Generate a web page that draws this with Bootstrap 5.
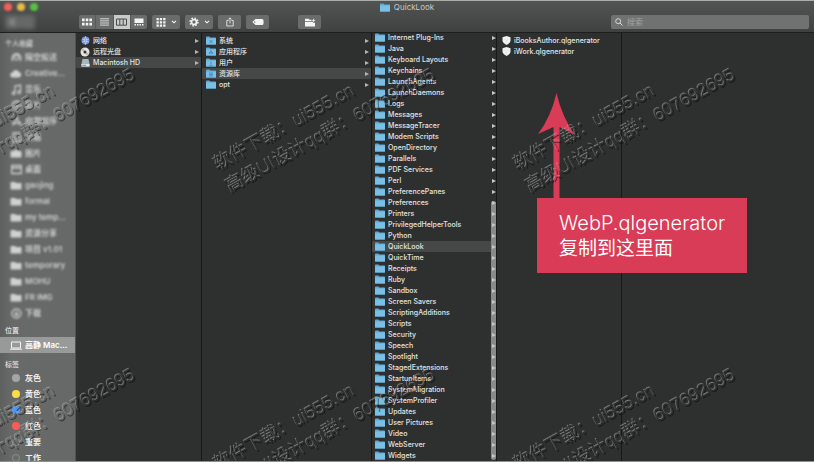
<!DOCTYPE html>
<html lang="zh-CN">
<head>
<meta charset="utf-8">
<meta name="viewport" content="width=device-width, initial-scale=1">
<title>QuickLook</title>
<link href="https://cdn.jsdelivr.net/npm/bootstrap@5.3.0/dist/css/bootstrap.min.css" rel="stylesheet">
<style>
html,body{height:100%}
body{font-family:Inter,"Noto Sans CJK SC",sans-serif;font-size:7px;line-height:11px;background:#2e302f;color:#e4e4e4;overflow:hidden}
svg{display:block;flex:none}
.finder{height:100%;border-bottom:1px solid #8d8f8e}
.topbar{border-top:1px solid #a9aeab;border-bottom:1px solid #1d1f1e;background:linear-gradient(#525553,#3e4140)}
.titleline{height:14px;color:#c6c9c7;font-size:8px;padding-bottom:1px}
.lights{left:4px;top:2px;gap:5px;filter:blur(1px)}
.lights i{width:8px;height:8px;border-radius:50%}
.l-close{background:#f4605a}.l-min{background:#e5bd46}.l-zoom{background:#5cc044}
.tools{height:17px;padding:0 5px 3px}
.tool{height:14px;padding:0;border:0;border-radius:2px;background:#6a6c6b;color:#f4f4f4;display:flex;align-items:center;justify-content:center;gap:5px}
.seg{width:68px;border-radius:2px;overflow:hidden}
.seg .tool{flex:1;border-radius:0}
.seg .tool+.tool{border-left:1px solid #585a59}
.seg .tool.active{background:#c9cbca;color:#4a4c4b}
.backs{width:30px;margin-right:44px;filter:blur(2px)}
.backs .tool{flex:1;background:#666867;color:#c4c6c5}
.w-menu{width:28px}.w-one{width:23px}
.gap-tools{gap:5px}
.ml-folder{margin-left:24px}
.search{width:198px;height:14px;border-radius:2px;background:#707271;padding:0 4px;gap:4px;color:#dcdcdc}
.search input{border:0;background:none;outline:0;padding:0;font-size:8px;line-height:12px;color:#eee;min-width:0}
.search input::placeholder{color:#a1a3a2;opacity:1}
.side{width:76px;background:linear-gradient(90deg,#5e5f5f,#686969 12px,#676868);border-right:1px solid #515252;font-size:8px;font-weight:600;color:#f0f0f0;padding-top:5px}
.side h2{font-size:7px;line-height:11px;margin:0;padding-left:5px;font-weight:500;color:#e2e2e2}
.side ul,.pane ul{list-style:none;margin:0;padding:0}
.side a{height:16px;padding-left:10px;gap:3px;color:inherit;text-decoration:none;white-space:nowrap}
.side a.on{background:#989999;color:#fff}
.side .places{padding:1px 0 6px}
.ic{width:12px;flex:none;display:flex;justify-content:center}
.hazy{filter:blur(1px);color:#d0d1d1}
.dot{width:8px;height:8px;border-radius:50%;border:1px solid transparent}
.d-gray{background:#a4a5a6}.d-yellow{background:#fbdd45}.d-blue{background:#4a97f7}.d-red{background:#fb5a55}.d-none2{border-color:#8d8e8e}
.pane{border-right:1px solid #171818;padding-top:2px;overflow:hidden;flex:none;font-weight:500}
.pane a{height:11px;padding:0 2px 0 4px;gap:3px;color:inherit;text-decoration:none;white-space:nowrap}
.pane a.on{background:#464847}
.pane .ic{width:10px}
.tri{border:solid transparent;border-width:2px 0 2px 4px;border-left-color:#b4b5b5;margin-left:auto}
.p1{width:126px}.p2{width:170px}.p3{width:125px;padding-top:0}.p4{width:125px}
.p3 ul{margin-top:-1px}
.p3 a{padding-left:3px;padding-right:0}
.scroller{right:0;top:168px;bottom:1px;width:5px;border-radius:3px;background:#898a8a}
.p3 .tri{z-index:1;border-left-color:#c4c5c5}
.callout{left:537px;top:93px;width:210px}
.callout div{background:#d83c56;color:#fff;font-family:"Noto Sans CJK SC",sans-serif;font-size:19px;line-height:24px;padding:13px 22px 14px}
.callout p{margin:0}
.callout .latin{font-family:Inter,sans-serif;font-size:20px;font-weight:300}
.callout svg{margin-left:1px}
.marks{inset:0;width:100%;height:100%;pointer-events:none;font-family:"Liberation Sans","Noto Sans CJK SC",sans-serif;font-size:18px}
</style>
<script src="https://cdn.jsdelivr.net/npm/bootstrap@5.3.0/dist/js/bootstrap.bundle.min.js"></script>
</head>
<body>
<svg width="0" height="0" class="position-absolute" aria-hidden="true">
<symbol id="folder" viewBox="0 0 10 9"><path fill="#5fa9d6" d="M0 1.2Q0 .5.7.5H3.4L4.3 1.4H9.3Q10 1.4 10 2V8Q10 8.5 9.4 8.5H.6Q0 8.5 0 8Z"/><path fill="#79bfe6" d="M0 2.6H10V8Q10 8.5 9.4 8.5H.6Q0 8.5 0 8Z"/></symbol>
<symbol id="plain" viewBox="0 0 12 9"><path fill="currentColor" d="M.5 1H5L6 2H11.5V8.5H.5Z"/></symbol>
<symbol id="plug" viewBox="0 0 9 9"><path fill="#f1f2f3" d="M4.5 0 8.5 1.2V5Q8 7.5 4.5 9 1 7.5.5 5V1.2Z"/><path d="M4.5 4.2V8M4.5 4.2 1.5 3M4.5 4.2 7.5 3" fill="none" stroke="#d8dadc" stroke-width=".5"/></symbol>
<symbol id="chev" viewBox="0 0 6 4"><path d="M1 .8 3 2.8 5 .8" fill="none" stroke="currentColor" stroke-width="1.1"/></symbol>
<symbol id="grid" viewBox="0 0 10 8"><path fill="currentColor" d="M0 .5H2.6V3.2H0ZM3.7.5H6.3V3.2H3.7ZM7.4.5H10V3.2H7.4ZM0 4.8H2.6V7.5H0ZM3.7 4.8H6.3V7.5H3.7ZM7.4 4.8H10V7.5H7.4Z"/></symbol>
</svg>
<div class="finder d-flex flex-column position-relative">
<header class="topbar">
 <div class="titleline d-flex align-items-center justify-content-center gap-1 position-relative">
  <div class="lights d-flex position-absolute"><i class="l-close"></i><i class="l-min"></i><i class="l-zoom"></i></div>
  <svg width="10" height="9"><use href="#folder"/></svg><span>QuickLook</span>
 </div>
 <div class="tools d-flex align-items-center">
  <div class="backs d-flex">
   <button class="tool" aria-label="后退"><svg width="5" height="8" viewBox="0 0 5 8"><path d="M4 1 1 4 4 7" fill="none" stroke="currentColor" stroke-width="1.500"/></svg></button>
   <button class="tool" aria-label="前进"></button>
  </div>
  <div class="d-flex gap-tools">
   <div class="seg d-flex">
    <button class="tool" aria-label="图标"><svg width="10" height="8"><use href="#grid"/></svg></button>
    <button class="tool" aria-label="列表"><svg width="9" height="8" viewBox="0 0 9 8"><path d="M0 .8H9M0 2.9H9M0 5H9M0 7.1H9" stroke="currentColor" stroke-width=".8"/></svg></button>
    <button class="tool active" aria-label="分栏"><svg width="11" height="8" viewBox="0 0 11 8"><path d="M.5 1H10.500V7.200H.5ZM3.800 1V7M7.200 1V7" fill="none" stroke="currentColor"/></svg></button>
    <button class="tool" aria-label="画廊"><svg width="10" height="8" viewBox="0 0 10 8"><path fill="currentColor" d="M.5.5H9.500V5H.5ZM.5 6H2V7.500H.5ZM3 6H4.500V7.500H3ZM5.500 6H7V7.500H5.500ZM8 6H9.500V7.500H8Z"/></svg></button>
   </div>
   <button class="tool w-menu" aria-label="排列"><svg width="10" height="9" viewBox="0 0 10 9"><path fill="currentColor" d="M.5 0H2.800V2.300H.5ZM3.800 0H6.100V2.300H3.800ZM7.200 0H9.500V2.300H7.200ZM.5 3.300H2.800V5.600H.5ZM3.800 3.300H6.100V5.600H3.800ZM7.200 3.300H9.500V5.600H7.200ZM.5 6.600H2.800V8.800H.5ZM3.800 6.600H6.100V8.800H3.800ZM7.200 6.600H9.500V8.800H7.200Z"/></svg><svg width="6" height="4"><use href="#chev"/></svg></button>
   <button class="tool w-menu" aria-label="操作"><svg width="10" height="10" viewBox="0 0 10 10"><g fill="none" stroke="currentColor"><circle cx="5" cy="5" r="2.500" stroke-width="1.700"/><circle cx="5" cy="5" r="3.900" stroke-width="1.500" stroke-dasharray="1.530 1.530"/></g></svg><svg width="6" height="4"><use href="#chev"/></svg></button>
   <button class="tool w-one" aria-label="共享"><svg width="8" height="10" viewBox="0 0 8 10"><path d="M2.500 3.500H.8V9H7.200V3.500H5.500M4 6.500V1M2.300 2.500 4 .8 5.700 2.500" fill="none" stroke="currentColor" stroke-width=".8"/></svg></button>
   <button class="tool w-one" aria-label="标签"><svg width="12" height="8" viewBox="0 0 12 8"><path fill="currentColor" fill-rule="evenodd" d="M3.500 1H10Q11.500 1 11.500 2.500V5.500Q11.500 7 10 7H3.500L.8 4.500Q.3 4 .8 3.500ZM3 3.400A.7.700 0 1 0 3 4.700.7.700 0 0 0 3 3.400Z"/></svg></button>
   <button class="tool w-one ml-folder" aria-label="新建文件夹"><svg width="12" height="9" viewBox="0 0 12 9"><path fill="currentColor" d="M1 .7H4.500L5.500 1.700H7.500V3H1ZM1 3.700H8.500L9.500 4.800H11V8.500H1Z"/><path d="M9.600.8V4M8 2.400H11.200" stroke="currentColor" stroke-width=".8"/></svg></button>
  </div>
  <label class="search d-flex align-items-center ms-auto" for="q"><svg width="8" height="8" viewBox="0 0 8 8"><circle cx="3.200" cy="3.200" r="2.500" fill="none" stroke="currentColor" stroke-width=".9"/><path d="M5 5 7.500 7.500" stroke="currentColor"/></svg><input id="q" class="flex-grow-1" type="text" placeholder="搜索" aria-label="搜索"></label>
 </div>
</header>
<main class="d-flex flex-grow-1 overflow-hidden">
 <nav class="side flex-shrink-0 overflow-hidden" id="side"></nav>
 <section class="pane p1" id="p1"></section>
 <section class="pane p2" id="p2"></section>
 <section class="pane p3 position-relative" id="p3"></section>
 <section class="pane p4" id="p4"></section>
 <section class="flex-grow-1"></section>
</main>
<div class="callout position-absolute">
 <svg width="38" height="105" viewBox="0 0 38 105"><path fill="#d83c56" d="M18.500 0Q24 24 37 42Q28 37 21.500 34V105H15.500V34Q9 37 0 41Q13 24 18.500 0Z"/></svg>
 <div><p class="latin">WebP.qlgenerator</p><p>复制到这里面</p></div>
</div>
<svg class="marks position-absolute" id="marks" aria-hidden="true">
 <defs><filter id="emboss" x="-5%" y="-5%" width="110%" height="110%">
  <feOffset in="SourceAlpha" dx="-1" dy="-1" result="up"/><feComposite in="up" in2="SourceAlpha" operator="out" result="upEdge"/>
  <feFlood flood-color="#b4b6b5" flood-opacity=".5"/><feComposite in2="upEdge" operator="in" result="light"/>
  <feOffset in="SourceAlpha" dx="1" dy="1" result="down"/><feComposite in="down" in2="SourceAlpha" operator="out" result="downEdge"/>
  <feFlood flood-color="#0c0d0d" flood-opacity=".5"/><feComposite in2="downEdge" operator="in" result="dark"/>
  <feMerge><feMergeNode in="dark"/><feMergeNode in="light"/></feMerge></filter></defs>
</svg>
</div>
<script>
const use=(id,w,h)=>`<svg width="${w}" height="${h}"><use href="#${id}"/></svg>`;
const line=d=>`<svg width="11" height="11" viewBox="0 0 11 11"><path d="${d}" fill="none" stroke="currentColor" stroke-width="1.3"/></svg>`;
const li=(icon,text,cls='',tri='')=>`<li><a href="#" class="d-flex align-items-center ${cls}"><span class="ic">${icon}</span><span>${text}</span>${tri}</a></li>`;
const tri='<i class="tri"></i>';
const fold=use('folder',10,9), side=use('plain',12,9);
const glyph={
 air:line('M2 9A4.500 4.500 0 1 1 9 9M3.700 7.500A2.500 2.500 0 1 1 7.300 7.500M5.500 6V9'),
 cloud:'<svg width="12" height="9" viewBox="0 0 12 9"><path fill="currentColor" d="M3 8.500A2.500 2.500 0 0 1 2.500 3.500 3.500 3.500 0 0 1 9 3 2.800 2.800 0 0 1 9 8.500Z"/></svg>',
 music:line('M4 9V2L9.500 1V8M4 9A1.300 1.300 0 1 1 2.500 8H4M9.500 8A1.300 1.300 0 1 1 8 7H9.500'),
 apps:line('M2 9.500 6 1.500 9.500 9.500M1 7H10.500'),
 doc:line('M2 1H7L9 3V10H2ZM4 5H7M4 7.500H7'),
 camera:'<svg width="12" height="9" viewBox="0 0 12 9"><path fill="currentColor" d="M.5 2H3.500L4.500.7H7.500L8.500 2H11.500V8.500H.5Z"/></svg>',
 desk:line('M.7 1.500H10.300V9.500H.7ZM1 4H10'),
 down:line('M5.500 1A4.500 4.500 0 1 1 5.400 1M5.500 3V7.500M3.500 5.500 5.500 7.500 7.500 5.500')
};
document.getElementById('side').innerHTML=
 `<div class="hazy"><h2>个人收藏</h2><ul>`+
 [[glyph.air,'隔空投送'],[glyph.cloud,'Creative...'],[glyph.music,'音乐'],[glyph.down,'影片'],[glyph.apps,'应用程序'],[glyph.doc,'文稿'],[glyph.camera,'图片'],[glyph.desk,'桌面'],
 [side,'gaojing'],[side,'formal'],[side,'my temp...'],[side,'资源分享'],[side,'项目 v1.01'],[side,'temporary'],[side,'MOHU'],[side,'FR IMG'],[glyph.down,'下载']].map(r=>li(...r)).join('')+
 `</ul></div><h2 class="pt-1">位置</h2><ul class="places">`+
 li('<svg width="12" height="9" viewBox="0 0 12 9"><path d="M1.500 1H10.500V7H1.500ZM0 8.200H12" fill="none" stroke="currentColor" stroke-width=".9"/></svg>','高静 Mac...','on')+
 `</ul><h2>标签</h2><ul>`+
 [['gray','灰色'],['yellow','黄色'],['blue','蓝色'],['red','红色'],['none2','重要'],['none2','工作']].map(([c,t])=>li(`<i class="dot d-${c}"></i>`,t)).join('')+'</ul>';
const globe='<svg width="9" height="9" viewBox="0 0 9 9"><circle cx="4.500" cy="4.500" r="4" fill="#6f8fcb"/><path d="M1 3Q4 5 8 3M1 6Q4 4 8 6M4.500.5Q2 4 4.500 8.500M4.500.5Q7 4 4.500 8.500" fill="none" stroke="#d5e0f5" stroke-width=".6"/></svg>';
const disc='<svg width="10" height="10" viewBox="0 0 10 10"><circle cx="5" cy="5" r="4.500" fill="#e6e4e0"/><path d="M5 5 1 3A4.500 4.500 0 0 1 3 1ZM5 5 9 7A4.500 4.500 0 0 1 7 9Z" fill="#b8b6a4"/><circle cx="5" cy="5" r="1.500" fill="#333"/></svg>';
const drive='<svg width="9" height="9" viewBox="0 0 9 9"><path d="M1.500 1H7.500L8.500 6V8.500H.5V6Z" fill="#a9b6bc"/><path d="M.5 6H8.500V8.500H.5Z" fill="#e2e6e8"/><path d="M1.500 7.300H5" stroke="#556" stroke-width=".7"/></svg>';
const mark=d=>`<svg width="10" height="9" viewBox="0 0 10 9"><use href="#folder"/><path d="${d}" fill="none" stroke="#3d83b2" stroke-width=".8"/></svg>`;
const fill=(id,rows)=>document.getElementById(id).innerHTML='<ul>'+rows.join('')+'</ul>';
fill('p1',[li(globe,'网络','',tri),li(disc,'远程光盘','',tri),li(drive,'Macintosh HD','on',tri)]);
fill('p2',[li(mark('M3.500 4 6.500 7M6.500 4 3.500 7'),'系统','',tri),li(mark('M3 7 5 3.500 7 7M3 6H7'),'应用程序','',tri),li(mark('M5 3.500V6M3.300 7.300H6.700'),'用户','',tri),li(mark('M3 4H7M3 5.500H7M3 7H7'),'资源库','on',tri),li(fold,'opt','',tri)]);
fill('p3','Internet Plug-Ins,Java,Keyboard Layouts,Keychains,LaunchAgents,LaunchDaemons,Logs,Messages,MessageTracer,Modem Scripts,OpenDirectory,Parallels,PDF Services,Perl,PreferencePanes,Preferences,Printers,PrivilegedHelperTools,Python,QuickLook,QuickTime,Receipts,Ruby,Sandbox,Screen Savers,ScriptingAdditions,Scripts,Security,Speech,Spotlight,StagedExtensions,StartupItems,SystemMigration,SystemProfiler,Updates,User Pictures,Video,WebServer,Widgets'.split(',').map(t=>li(fold,t,t==='QuickLook'?'on':'',tri)));
document.getElementById('p3').insertAdjacentHTML('beforeend','<div class="scroller position-absolute"></div>');
fill('p4',[li(use('plug',9,9),'iBooksAuthor.qlgenerator'),li(use('plug',9,9),'iWork.qlgenerator')]);
let marks='';
for(const y of [0,300])for(const x of [-300,0,300])
 marks+=`<g filter="url(#emboss)"><text transform="translate(${x+218} ${y+171}) rotate(-29)">软件下载：ui555.cn</text><text transform="translate(${x+230} ${y+193}) rotate(-29)">高级UI设计qq群：607692695</text></g>`;
document.getElementById('marks').insertAdjacentHTML('beforeend',marks);
</script>
</body>
</html>
